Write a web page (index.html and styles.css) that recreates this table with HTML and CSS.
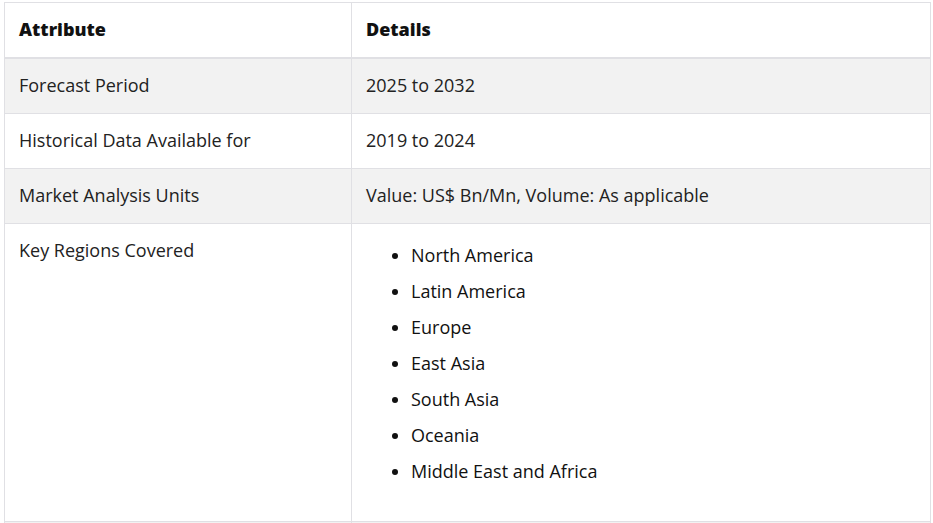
FILE: index.html
```html
<!DOCTYPE html>
<html lang="en">
<head>
  <meta charset="UTF-8" />
  <title>Report Scope</title>
  <link rel="stylesheet" href="styles.css">
</head>
<body>
  <table class="scope">
    <thead>
      <tr><th class="attr">Attribute</th><th>Details</th></tr>
    </thead>
    <tbody>
      <tr><td>Forecast Period</td><td>2025 to 2032</td></tr>
      <tr><td>Historical Data Available for</td><td>2019 to 2024</td></tr>
      <tr><td>Market Analysis Units</td><td>Value: US$ Bn/Mn, Volume: As applicable</td></tr>
      <tr>
        <td>Key Regions Covered</td>
        <td>
          <ul class="regions">
            <li>North America</li>
            <li>Latin America</li>
            <li>Europe</li>
            <li>East Asia</li>
            <li>South Asia</li>
            <li>Oceania</li>
            <li>Middle East and Africa</li>
          </ul>
        </td>
      </tr>
      <tr class="next"><td></td><td></td></tr>
    </tbody>
  </table>
</body>
</html>
```
FILE: styles.css
```css
* { box-sizing: border-box; }
body {
  margin: 0;
  padding: 2px 2px 0 4px;
  background: #fff;
  color: #222;
  font-family: "Open Sans", sans-serif;
  font-size: 18px;
}

.scope {
  width: 927px;
  border-collapse: collapse;
}

.scope th, .scope td {
  border: 1px solid #e0e0e4;
  padding: 14px 14px 16px;
  line-height: 24px;
  text-align: left;
  vertical-align: top;
}

.scope th {
  font-weight: 800;
  color: #111;
  border-bottom: 2px solid #e0e0e4;
}

.scope th.attr, .scope td:first-child { width: 347px; }

.scope tbody tr:nth-child(odd) { background: #f2f2f2; }

.scope tr.next td { height: 55px; }

.regions {
  margin: 5px 0 22px;
  padding-left: 45px;
}

.regions li {
  margin-bottom: 12px;
  color: #111;
}
```
